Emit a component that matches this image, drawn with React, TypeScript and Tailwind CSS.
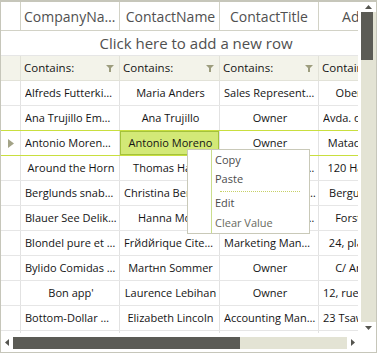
import React from 'react';

type Row = { company: string; contact: string; title: string; address: string };

const rows: Row[] = [
  { company: 'Alfreds Futterkiste', contact: 'Maria Anders', title: 'Sales Representative', address: 'Obere Str. 57' },
  { company: 'Ana Trujillo Emparedados y helados', contact: 'Ana Trujillo', title: 'Owner', address: 'Avda. de la Constitución 2222' },
  { company: 'Antonio Moreno Taquería', contact: 'Antonio Moreno', title: 'Owner', address: 'Mataderos 2312' },
  { company: 'Around the Horn', contact: 'Thomas Hardy', title: 'Sales Representative', address: '120 Hanover Sq.' },
  { company: 'Berglunds snabbköp', contact: 'Christina Berglund', title: 'Order Administrator', address: 'Berguvsvägen 8' },
  { company: 'Blauer See Delikatessen', contact: 'Hanna Moos', title: 'Sales Representative', address: 'Forsterstr. 57' },
  { company: 'Blondel рure et fils', contact: 'Frйdйrique Citeaux', title: 'Marketing Manager', address: '24, place Kléber' },
  { company: 'Bуlido Comidas preparadas', contact: 'Martнn Sommer', title: 'Owner', address: 'C/ Araquil, 67' },
  { company: "Bon app'", contact: 'Laurence Lebihan', title: 'Owner', address: '12, rue des Bouchers' },
  { company: 'Bottom-Dollar Markets', contact: 'Elizabeth Lincoln', title: 'Accounting Manager', address: '23 Tsawassen Blvd.' },
  { company: "B's Beverages", contact: 'Victoria Ashworth', title: 'Sales Representative', address: 'Fauntleroy Circus' },
];

const Funnel = () => (
  <svg width="8" height="7" viewBox="0 0 8 7" className="shrink-0">
    <path d="M0 0 H8 L5 3 V7 H3 V3 Z" fill="#9d9d7e" />
  </svg>
);

const FilterCell = ({ w, icon = true }: { w: string; icon?: boolean }) => (
  <div className={`${w} shrink-0 border-r border-[#e2e2d8] flex items-center justify-between pl-[3px] pr-[5px]`}>
    <span className="whitespace-nowrap">Contains:</span>
    {icon && <Funnel />}
  </div>
);

const DataRow = ({ row, index }: { row: Row; index: number }) => {
  const selected = index === 2;
  const lineColor = index === 1 || index === 2 ? 'border-[#c9df3f]' : 'border-[#e6e6e6]';
  return (
    <div className={`flex h-[25px] shrink-0 border-b ${lineColor} text-[11px] text-[#141414]`}>
      <div className="w-[20px] shrink-0 border-r border-[#e2e2e2] flex items-center pl-[7px]">
        {selected && (
          <svg width="6" height="9" viewBox="0 0 6 9">
            <path d="M0 0 L6 4.5 L0 9 Z" fill="#a3a387" />
          </svg>
        )}
      </div>
      <div className="w-[99px] shrink-0 border-r border-[#e2e2e2] flex items-center pl-[4px] pr-[2px]">
        <span className="block w-full truncate text-center">{row.company}</span>
      </div>
      <div
        className={`w-[100px] shrink-0 border-r border-[#e2e2e2] flex items-center pl-[4px] pr-[2px] ${
          selected ? 'bg-[#d3e977] shadow-[inset_0_0_0_1px_#a4c23c]' : ''
        }`}
      >
        <span className="block w-full truncate text-center">{row.contact}</span>
      </div>
      <div className="w-[99px] shrink-0 border-r border-[#e2e2e2] flex items-center pl-[4px] pr-[2px]">
        <span className="block w-full truncate text-center">{row.title}</span>
      </div>
      <div className="w-[100px] shrink-0 border-r border-[#e2e2e2] flex items-center pl-[4px] pr-[2px]">
        <span className="block w-full truncate text-center">{row.address}</span>
      </div>
    </div>
  );
};

const ContextMenu = () => (
  <div className="absolute left-[186px] top-[147px] w-[123px] h-[85px] bg-white border border-[#c9c9b8] flex text-[11px] text-[#4c4c4c]">
    <div className="w-[24px] shrink-0 border-r border-[#cadd8c]" />
    <div className="flex flex-col flex-1">
      <div className="h-[20px] flex items-center pl-[3px]">Copy</div>
      <div className="h-[20px] flex items-center pl-[3px]">Paste</div>
      <div className="h-[4px] flex items-center pl-[8px]">
        <div className="w-[80px] border-t border-dotted border-[#c6d166]" />
      </div>
      <div className="h-[20px] flex items-center pl-[3px]">Edit</div>
      <div className="h-[20px] flex items-center pl-[3px] text-[#6a6a5e]">Clear Value</div>
    </div>
  </div>
);

export default function App() {
  return (
    <div className="relative w-[377px] h-[353px] bg-white border border-t-2 border-[#c6c6ba] flex flex-col overflow-hidden font-['Open_Sans','Noto_Sans',sans-serif]">
      <div className="flex h-[331px] shrink-0">
        {/* grid */}
        <div className="w-[357px] shrink-0 overflow-hidden flex flex-col">
          {/* header */}
          <div className="flex h-[29px] shrink-0 border-b border-[#d2d2c6] text-[14px] text-[#505050]">
            <div className="w-[20px] shrink-0 border-r border-[#d2d2c6]" />
            <div className="w-[99px] shrink-0 border-r border-[#d2d2c6] flex items-center pl-[3px] pr-[2px]">
              <span className="block w-full truncate text-center">CompanyName</span>
            </div>
            <div className="w-[100px] shrink-0 border-r border-[#d2d2c6] flex items-center pl-[4px] pr-[2px]">
              <span className="block w-full truncate text-center">ContactName</span>
            </div>
            <div className="w-[99px] shrink-0 border-r border-[#d2d2c6] flex items-center px-[4px]">
              <span className="block w-full truncate text-center">ContactTitle</span>
            </div>
            <div className="w-[100px] shrink-0 border-r border-[#d2d2c6] flex items-center px-[4px]">
              <span className="block w-full truncate text-center">Address</span>
            </div>
          </div>

          {/* new row */}
          <div className="flex h-[25px] shrink-0 border-b border-[#e6e6e6] items-center text-[15px] text-[#505050]">
            <div className="pl-[20px] w-[370px] shrink-0 text-center whitespace-nowrap">Click here to add a new row</div>
          </div>

          {/* filter row */}
          <div className="flex h-[25px] shrink-0 border-b border-[#e2e2d8] bg-[#f3f3ea] text-[11.5px] text-[#141414]">
            <div className="w-[20px] shrink-0 border-r border-[#e2e2d8]" />
            <FilterCell w="w-[99px]" />
            <FilterCell w="w-[100px]" />
            <FilterCell w="w-[99px]" />
            <FilterCell w="w-[100px]" />
          </div>

          {rows.map((row, i) => (
            <DataRow key={row.company} row={row} index={i} />
          ))}
        </div>

        {/* vertical scrollbar */}
        <div className="w-[18px] shrink-0 bg-white flex flex-col">
          <div className="h-[10px] shrink-0 flex items-center justify-center pl-[2px]">
            <svg width="7" height="4" viewBox="0 0 7 4">
              <path d="M0 4 L3.5 0 L7 4 Z" fill="#555550" />
            </svg>
          </div>
          <div className="flex-1 ml-[3px] bg-[#e3e3d4]">
            <div className="h-[48px] w-[12px] bg-[#5b5b55]" />
          </div>
          <div className="h-[11px] shrink-0 flex items-center justify-center pl-[2px]">
            <svg width="7" height="4" viewBox="0 0 7 4">
              <path d="M0 0 L3.5 4 L7 0 Z" fill="#555550" />
            </svg>
          </div>
        </div>
      </div>

      {/* horizontal scrollbar */}
      <div className="flex h-[19px] shrink-0 bg-white">
        <div className="w-[12px] shrink-0 flex items-center justify-center">
          <svg width="4" height="7" viewBox="0 0 4 7">
            <path d="M4 0 L0 3.5 L4 7 Z" fill="#555550" />
          </svg>
        </div>
        <div className="w-[334px] shrink-0 flex pt-[4px] pb-[3px]">
          <div className="w-[227px] bg-[#5b5b55]" />
          <div className="flex-1 bg-[#e3e3d4]" />
        </div>
        <div className="w-[11px] shrink-0 flex items-center justify-center">
          <svg width="4" height="7" viewBox="0 0 4 7">
            <path d="M0 0 L4 3.5 L0 7 Z" fill="#555550" />
          </svg>
        </div>
        <div className="flex-1" />
      </div>

      <ContextMenu />
    </div>
  );
}
